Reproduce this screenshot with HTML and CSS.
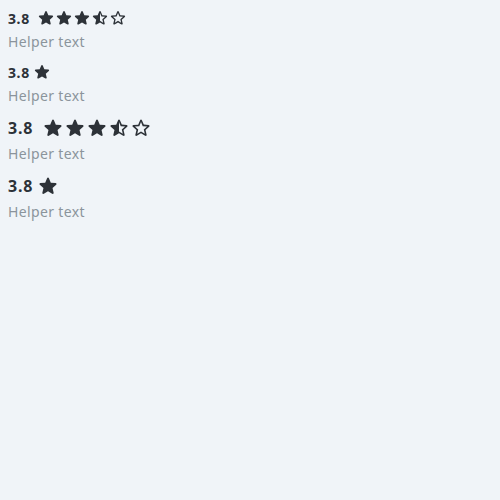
FILE: index.html
```html
<!DOCTYPE html>
<html>
<head>
<meta charset="utf-8">
<link rel="stylesheet" href="styles.css">
</head>
<body>
<svg width="0" height="0" class="defs">
  <defs>
    <symbol id="star" viewBox="0 0 24 24"><path d="M12 17.27l4.15 2.51c.76.46 1.69-.22 1.49-1.08l-1.1-4.72 3.67-3.18c.67-.58.31-1.68-.57-1.75l-4.83-.41-1.89-4.46c-.34-.81-1.5-.81-1.84 0L9.19 8.63l-4.83.41c-.88.07-1.24 1.17-.57 1.75l3.67 3.18-1.1 4.72c-.2.86.73 1.54 1.49 1.08l4.15-2.5z"/></symbol>
    <symbol id="star-half" viewBox="0 0 24 24"><path d="M19.65 9.04l-4.84-.42-1.89-4.45c-.34-.81-1.5-.81-1.84 0L9.19 8.63l-4.83.41c-.88.07-1.24 1.17-.57 1.75l3.67 3.18-1.1 4.72c-.2.86.73 1.54 1.49 1.08l4.15-2.5 4.150 2.51c.76.46 1.69-.22 1.49-1.08l-1.1-4.73 3.67-3.18c.67-.58.32-1.68-.56-1.75zM12 15.4V6.1l1.71 4.04 4.38.38-3.32 2.88 1 4.28L12 15.4z"/></symbol>
    <symbol id="star-empty" viewBox="0 0 24 24"><path d="M19.65 9.04l-4.84-.42-1.89-4.45c-.34-.81-1.5-.81-1.84 0L9.19 8.63l-4.83.41c-.88.07-1.24 1.17-.57 1.75l3.67 3.18-1.1 4.72c-.2.86.73 1.54 1.49 1.08l4.15-2.5 4.15 2.51c.76.46 1.69-.22 1.49-1.08l-1.1-4.73 3.67-3.18c.67-.58.32-1.68-.56-1.75zM12 15.4l-3.76 2.27 1-4.28-3.32-2.88 4.38-.38L12 6.1l1.71 4.04 4.38.38-3.32 2.88 1 4.28L12 15.4z"/></symbol>
  </defs>
</svg>

<div class="field sm">
  <div class="rating">
    <span class="value">3.8</span>
    <span class="stars multi">
      <svg class="star"><use href="#star"/></svg>
      <svg class="star"><use href="#star"/></svg>
      <svg class="star"><use href="#star"/></svg>
      <svg class="star"><use href="#star-half"/></svg>
      <svg class="star"><use href="#star-empty"/></svg>
    </span>
  </div>
  <div class="helper">Helper text</div>
</div>

<div class="field sm">
  <div class="rating">
    <span class="value">3.8</span>
    <span class="stars">
      <svg class="star"><use href="#star"/></svg>
    </span>
  </div>
  <div class="helper">Helper text</div>
</div>

<div class="field md">
  <div class="rating">
    <span class="value">3.8</span>
    <span class="stars multi">
      <svg class="star"><use href="#star"/></svg>
      <svg class="star"><use href="#star"/></svg>
      <svg class="star"><use href="#star"/></svg>
      <svg class="star"><use href="#star-half"/></svg>
      <svg class="star"><use href="#star-empty"/></svg>
    </span>
  </div>
  <div class="helper">Helper text</div>
</div>

<div class="field md">
  <div class="rating">
    <span class="value">3.8</span>
    <span class="stars">
      <svg class="star"><use href="#star"/></svg>
    </span>
  </div>
  <div class="helper">Helper text</div>
</div>
</body>
</html>
```
FILE: styles.css
```css
html, body {
  background: #f0f4f8;
}
body {
  margin: 8px;
  font-family: "Noto Sans", "Open Sans", sans-serif;
  color: #2d3238;
}
.defs {
  position: absolute;
  width: 0;
  height: 0;
}
.field {
  display: flex;
  flex-direction: column;
  align-items: flex-start;
  margin-bottom: 10px;
}
.rating {
  display: flex;
  align-items: center;
}
.value {
  font-weight: 700;
  letter-spacing: 0.6px;
}
.stars {
  display: flex;
  align-items: center;
}
.star {
  flex: none;
  fill: #2d3238;
}
.sm .rating {
  height: 20px;
  gap: 2px;
}
.sm .value {
  font-size: 14px;
}
.sm .star {
  width: 20px;
  height: 20px;
}
.sm .star + .star {
  margin-left: -2px;
}
.sm .stars.multi {
  margin-left: 4px;
}
.md .rating {
  height: 24px;
  gap: 3px;
}
.md .value {
  font-size: 16px;
  letter-spacing: 0.8px;
}
.md .star {
  width: 24px;
  height: 24px;
}
.md .star + .star {
  margin-left: -2px;
}
.md .stars.multi {
  margin-left: 5px;
}
.helper {
  margin-top: 4px;
  font-size: 14px;
  line-height: 20px;
  letter-spacing: 0.35px;
  color: #8b949c;
}
```
